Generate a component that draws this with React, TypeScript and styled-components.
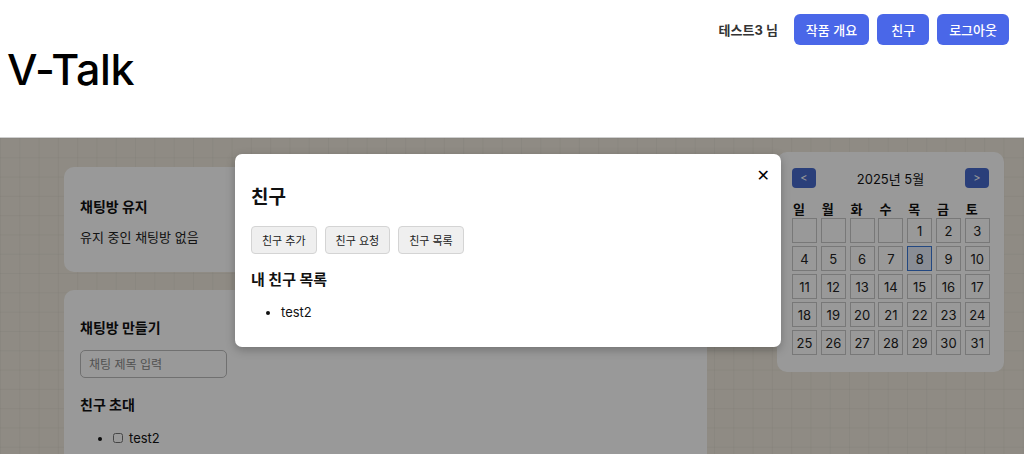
import React from "react";
import styled, { createGlobalStyle } from "styled-components";

const GlobalStyle = createGlobalStyle`
  html, body { margin: 0; padding: 0; }
  body {
    font-family: Inter, "Noto Sans CJK KR", sans-serif;
    color: #111;
    background: #fff;
    overflow: hidden;
  }
`;

const Page = styled.div`
  width: 1024px;
  height: 454px;
  display: flex;
  flex-direction: column;
  overflow: hidden;
`;

const Header = styled.header`
  height: 137px;
  flex: none;
  display: flex;
  justify-content: space-between;
  align-items: center;
  padding: 0 15px 0 7px;
  background: #fff;
  border-bottom: 1px solid #cfcfcf;
`;

const Logo = styled.h1`
  margin: 0;
  font-size: 43px;
  font-weight: 500;
  letter-spacing: -0.3px;
  line-height: 54px;
  color: #000;
`;

const Nav = styled.nav`
  align-self: flex-start;
  margin-top: 14px;
  display: flex;
  align-items: center;
  gap: 8px;
`;

const UserName = styled.span`
  font-size: 13px;
  font-weight: 700;
  color: #333;
  margin-right: 8px;
`;

const NavButton = styled.button`
  height: 31px;
  min-width: 52px;
  padding: 0 12px;
  border: none;
  border-radius: 6px;
  background: #4a67e8;
  color: #fff;
  font-family: inherit;
  font-size: 13px;
  font-weight: 500;
`;

const Main = styled.main`
  position: relative;
  flex: 1;
  display: grid;
  grid-template-columns: 643px 227px;
  column-gap: 70px;
  align-items: start;
  padding: 14px 20px 0 64px;
  background-color: #eee8dc;
  background-image: linear-gradient(rgba(0, 0, 0, 0.03) 1px, transparent 1px),
    linear-gradient(90deg, rgba(0, 0, 0, 0.03) 1px, transparent 1px);
  background-size: 19.3px 19.3px;
`;

const LeftColumn = styled.div`
  margin-top: 15px;
  display: flex;
  flex-direction: column;
  gap: 18px;
`;

const Card = styled.section<{ $top?: number }>`
  background: #fff;
  border-radius: 10px;
  padding: ${(p) => p.$top ?? 30}px 16px 25px;
`;

const CardTitle = styled.h3`
  margin: 0 0 10px;
  font-size: 14px;
  font-weight: 700;
  line-height: 20px;
`;

const CardText = styled.p`
  margin: 0;
  font-size: 13px;
  line-height: 20px;
  color: #222;
`;

const TextInput = styled.input`
  width: 147px;
  height: 28px;
  box-sizing: border-box;
  padding: 0 8px;
  border: 1px solid #bbb;
  border-radius: 5px;
  font-family: inherit;
  font-size: 12px;
  margin: 2px 0 17px;
  &::placeholder { color: #888; }
`;

const SubTitle = styled.h4`
  margin: 0 0 13px;
  font-size: 14px;
  font-weight: 700;
  line-height: 20px;
`;

const InviteList = styled.ul`
  margin: 0;
  padding-left: 33px;
  font-size: 13px;
  line-height: 20px;
`;

const InviteItem = styled.li`
  label { display: inline-flex; align-items: center; gap: 6px; }
  input { margin: 0; width: 10px; height: 10px; }
`;

const Calendar = styled.aside`
  background: #fff;
  border-radius: 10px;
  padding: 15px 14px 16px 15px;
  height: 220px;
  box-sizing: border-box;
`;

const CalHeader = styled.div`
  display: flex;
  justify-content: space-between;
  align-items: center;
  margin: 1px 1px 14px 0;
`;

const CalNav = styled.button`
  width: 24px;
  height: 20px;
  border: none;
  border-radius: 4px;
  background: #4669cc;
  color: #fff;
  font-family: inherit;
  font-size: 11px;
  padding: 0;
`;

const CalTitle = styled.span`
  font-size: 13px;
  color: #111;
`;

const CalGrid = styled.div`
  display: grid;
  grid-template-columns: repeat(7, 25px);
  column-gap: 3.8px;
  row-gap: 3px;
`;

const DayName = styled.div`
  font-size: 13px;
  font-weight: 700;
  line-height: 14px;
  padding-left: 1px;
  margin-bottom: -1px;
`;

const DayCell = styled.div<{ $today?: boolean }>`
  height: 25px;
  box-sizing: border-box;
  border: 1px solid ${(p) => (p.$today ? "#3b78d8" : "#c9c9c9")};
  background: ${(p) => (p.$today ? "#e4ecf8" : "#fff")};
  display: flex;
  align-items: center;
  justify-content: center;
  font-size: 13px;
  color: #222;
`;

const Overlay = styled.div`
  position: absolute;
  inset: 0;
  background: rgba(0, 0, 0, 0.4);
  display: flex;
  justify-content: center;
  align-items: flex-start;
  padding-top: 16px;
`;

const Modal = styled.div`
  position: relative;
  width: 546px;
  height: 193px;
  box-sizing: border-box;
  margin-left: -8px;
  background: #fff;
  border-radius: 7px;
  box-shadow: 0 3px 10px rgba(0, 0, 0, 0.25);
  padding: 32px 16px 0;
`;

const CloseButton = styled.button`
  position: absolute;
  top: 12px;
  right: 11px;
  border: none;
  background: none;
  font-family: "DejaVu Sans", sans-serif;
  font-size: 16px;
  font-weight: 700;
  padding: 0;
  color: #000;
`;

const ModalTitle = styled.h2`
  margin: 0 0 16px;
  font-size: 19px;
  font-weight: 700;
  line-height: 24px;
`;

const TabRow = styled.div`
  display: flex;
  gap: 8px;
  margin-bottom: 16px;
`;

const TabButton = styled.button`
  height: 28px;
  padding: 0 10px;
  border: 1px solid #d4d4d4;
  border-radius: 4px;
  background: #efefef;
  font-family: inherit;
  font-size: 11px;
  color: #222;
`;

const SectionTitle = styled.h3`
  margin: 0 0 12px;
  font-size: 15px;
  font-weight: 700;
  line-height: 20px;
`;

const FriendList = styled.ul`
  margin: 0;
  padding-left: 30px;
  font-size: 13px;
  line-height: 20px;
`;

const days = ["일", "월", "화", "수", "목", "금", "토"];

export default function App() {
  const cells: (number | null)[] = [null, null, null, null];
  for (let d = 1; d <= 31; d++) cells.push(d);

  return (
    <Page>
      <GlobalStyle />
      <Header>
        <Logo>V-Talk</Logo>
        <Nav>
          <UserName>테스트3 님</UserName>
          <NavButton>작품 개요</NavButton>
          <NavButton>친구</NavButton>
          <NavButton>로그아웃</NavButton>
        </Nav>
      </Header>
      <Main>
        <LeftColumn>
          <Card>
            <CardTitle>채팅방 유지</CardTitle>
            <CardText>유지 중인 채팅방 없음</CardText>
          </Card>
          <Card $top={28}>
            <CardTitle>채팅방 만들기</CardTitle>
            <TextInput placeholder="채팅 제목 입력" />
            <SubTitle>친구 초대</SubTitle>
            <InviteList>
              <InviteItem>
                <label>
                  <input type="checkbox" />
                  test2
                </label>
              </InviteItem>
            </InviteList>
          </Card>
        </LeftColumn>
        <Calendar>
          <CalHeader>
            <CalNav>&lt;</CalNav>
            <CalTitle>2025년 5월</CalTitle>
            <CalNav>&gt;</CalNav>
          </CalHeader>
          <CalGrid>
            {days.map((d) => (
              <DayName key={d}>{d}</DayName>
            ))}
            {cells.map((c, i) => (
              <DayCell key={i} $today={c === 8}>
                {c ?? ""}
              </DayCell>
            ))}
          </CalGrid>
        </Calendar>
        <Overlay>
          <Modal>
            <CloseButton>✕</CloseButton>
            <ModalTitle>친구</ModalTitle>
            <TabRow>
              <TabButton>친구 추가</TabButton>
              <TabButton>친구 요청</TabButton>
              <TabButton>친구 목록</TabButton>
            </TabRow>
            <SectionTitle>내 친구 목록</SectionTitle>
            <FriendList>
              <li>test2</li>
            </FriendList>
          </Modal>
        </Overlay>
      </Main>
    </Page>
  );
}
